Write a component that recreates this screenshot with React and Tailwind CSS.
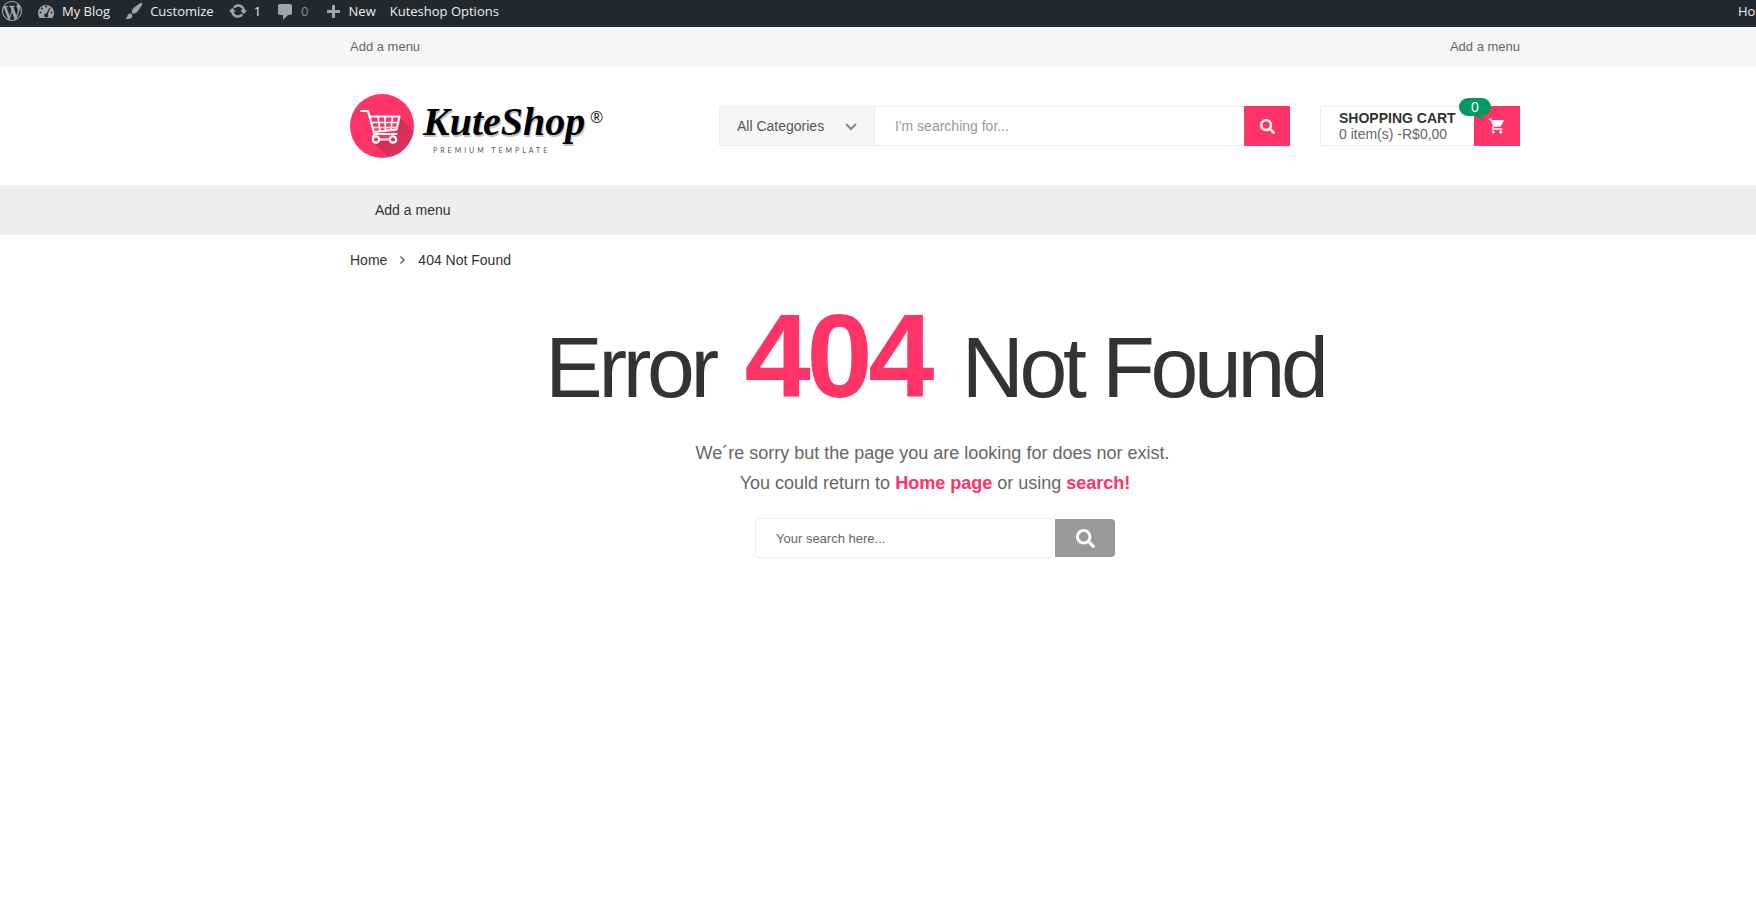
import React from "react";
import { FaSearch } from "react-icons/fa";
import { MdShoppingCart } from "react-icons/md";

const container = "pl-[350px] pr-[236px]";

const icons = {
  wordpress:
    "M20 10c0-5.51-4.49-10-10-10C4.48 0 0 4.49 0 10c0 5.52 4.48 10 10 10 5.51 0 10-4.48 10-10zM7.78 15.37L4.37 6.22c.55-.02 1.17-.08 1.17-.08.5-.06.44-1.13-.06-1.11 0 0-1.45.11-2.37.11-.18 0-.37 0-.58-.01C4.12 2.69 6.87 1.11 10 1.11c2.33 0 4.45.87 6.05 2.34-.68-.11-1.65.39-1.65 1.58 0 .74.45 1.36.9 2.1.35.61.55 1.36.55 2.46 0 1.49-1.4 5-1.4 5l-3.03-8.37c.54-.02.82-.17.82-.17.5-.05.44-1.25-.06-1.22 0 0-1.44.12-2.38.12-.87 0-2.33-.12-2.33-.12-.5-.03-.56 1.2-.06 1.22l.92.08 1.26 3.41zM17.41 10c.24-.64.74-1.87.43-4.25.7 1.29 1.05 2.71 1.05 4.25 0 3.29-1.73 6.24-4.4 7.78.97-2.59 1.94-5.2 2.92-7.78zM6.1 18.09C3.12 16.65 1.11 13.53 1.11 10c0-1.3.23-2.48.72-3.59C3.25 10.3 4.67 14.2 6.1 18.09zm4.03-6.63l2.58 6.98c-.86.29-1.76.45-2.71.45-.79 0-1.57-.11-2.29-.33.81-2.38 1.62-4.74 2.42-7.1z",
  dashboard:
    "M3.8 17h12.4c1.1-1.4 1.8-3.1 1.8-5a8 8 0 1 0-16 0c0 1.9.7 3.6 1.8 5zM9 5.500a1 1 0 1 1 2 0a1 1 0 1 1-2 0zM5 7.500a1 1 0 1 1 2 0a1 1 0 1 1-2 0zM13.700 6.200l.8.500-2.700 6.600a2 2 0 1 1-1.500-.8zM3.500 11.500a1 1 0 1 1 2 0a1 1 0 1 1-2 0zM14.500 11.500a1 1 0 1 1 2 0a1 1 0 1 1-2 0z",
  brush:
    "M18.33 3.57s.27-.8-.31-1.36c-.53-.52-1.22-.24-1.22-.24-.61.3-5.76 3.47-7.67 5.57-.86.96-2.06 3.79-1.09 4.82.92.98 3.96-.17 4.79-1 2.06-2.06 5.21-7.17 5.5-7.79zM1.4 17.65c2.37-1.56 1.46-3.41 3.23-4.64.93-.65 2.22-.62 3.08.29.63.67.8 2.57-.16 3.46-1.57 1.45-4 1.55-6.15.89z",
  update:
    "M10.2 3.28c3.53 0 6.43 2.61 6.92 6h2.08l-3.5 4-3.5-4h2.32c-.45-1.97-2.21-3.45-4.32-3.45-1.45 0-2.73.71-3.54 1.78L4.95 5.66C6.23 4.2 8.11 3.28 10.2 3.28zm-.4 13.44c-3.52 0-6.43-2.61-6.92-6H.8l3.5-4c1.17 1.33 2.33 2.67 3.5 4H5.48c.45 1.97 2.21 3.45 4.32 3.45 1.45 0 2.73-.71 3.54-1.78l1.71 1.95c-1.28 1.46-3.15 2.38-5.25 2.38z",
  comment:
    "M5 3h10c1.100 0 2 .9 2 2v7c0 1.100-.9 2-2 2h-2l-5 5v-5H5c-1.100 0-2-.9-2-2V5c0-1.100.9-2 2-2z",
  plus: "M17 9v3h-5v5H9v-5H4V9h5V4h3v5h5z",
};

function BarItem({ icon, label, dim, title }) {
  return (
    <a href="#" aria-label={title} className="flex items-center gap-1.5">
      {icon && (
        <svg viewBox="0 0 20 20" className="size-5 fill-[#a0a5aa]" fillRule="evenodd" aria-hidden="true">
          <path d={icons[icon]} />
        </svg>
      )}
      {label && <span className={dim ? "text-[#8b8f93]" : "text-[#eeeeee]"}>{label}</span>}
    </a>
  );
}

function AdminBar() {
  return (
    <nav className="flex h-[27px] items-start justify-between overflow-hidden bg-[#23282d] pt-px pl-0.5 font-['Segoe_UI','Open_Sans',sans-serif] text-[13px] leading-5 whitespace-nowrap">
      <div className="flex items-center gap-3.5">
        <BarItem icon="wordpress" title="About WordPress" />
        <BarItem icon="dashboard" label="My Blog" />
        <BarItem icon="brush" label="Customize" />
        <BarItem icon="update" label="1" />
        <BarItem icon="comment" label="0" dim />
        <BarItem icon="plus" label="New" />
        <BarItem label="Kuteshop Options" />
      </div>
      <span className="w-[18px] text-[#eeeeee]">Howdy,</span>
    </nav>
  );
}

function Logo() {
  return (
    <a href="#" aria-label="KuteShop" className="block">
      <svg viewBox="0 0 256 66" className="h-[66px] w-[256px]">
        <defs>
          <clipPath id="disc">
            <circle cx="32" cy="32" r="32" />
          </clipPath>
          <linearGradient id="shade" x1="0" y1="0" x2="1" y2="1">
            <stop offset="0" stopColor="#c22b55" />
            <stop offset="1" stopColor="#f03361" />
          </linearGradient>
        </defs>
        <circle cx="32" cy="32" r="32" fill="#ff3366" />
        <path clipPath="url(#disc)" d="M50 24L72 46L60 72H46L24 49L45 43z" fill="url(#shade)" />
        <g fill="none" stroke="#fff" strokeLinecap="round" strokeLinejoin="round">
          <path strokeWidth="2.200" d="M11 17h7l6.500 23h22M20 22.500h29.500l-3 13-23 2.500M24.500 40l-1.500 3" />
          <path strokeWidth="1.700" d="M21.500 28.500h26M28 23l2 14.500M35 23l.5 14M42.500 23l-1.500 13M23 33.500h24" />
          <circle strokeWidth="2.200" cx="26" cy="45.500" r="3.200" />
          <circle strokeWidth="2.200" cx="43" cy="45.500" r="3.200" />
          <path strokeWidth="2.200" d="M29.500 45.500h10" />
        </g>
        <text
          x="73"
          y="41"
          fill="#000"
          fontSize="40"
          className="font-['Brush_Script_MT','Liberation_Serif',serif] font-bold italic [text-shadow:1px_2px_0_#c4c4c4]"
        >
          KuteShop
        </text>
        <text x="83" y="59" fill="#555" fontFamily="Lato, sans-serif" fontSize="7" letterSpacing="3">PREMIUM TEMPLATE</text>
        <text x="240" y="29" fill="#222" fontFamily="'Open Sans', sans-serif" fontSize="16">®</text>
      </svg>
    </a>
  );
}

function Header() {
  return (
    <header className={`flex h-[118px] items-start pt-[27px] ${container}`}>
      <Logo />
      <form className="mt-3 ml-[113px] flex h-10 flex-1 border border-r-0 border-[#eeeeee]">
        <div className="relative flex w-[155px] border-r border-[#eeeeee] bg-[#f6f6f6]">
          <select aria-label="Category" className="w-full appearance-none bg-transparent pl-[17px] text-sm text-[#555]">
            <option>All Categories</option>
          </select>
          <svg viewBox="0 0 12 8" className="pointer-events-none absolute top-4 right-[17px] h-2 w-3" fill="none" stroke="#888" strokeWidth="2" aria-hidden="true">
            <path d="M1 1l5 5 5-5" />
          </svg>
        </div>
        <input aria-label="Search products" placeholder="I'm searching for..." className="min-w-0 flex-1 px-5 text-sm outline-none placeholder:text-[#999]" />
        <button aria-label="Search" className="-my-px flex w-[46px] items-center justify-center bg-[#ff3366] text-white">
          <FaSearch className="size-[15px]" />
        </button>
      </form>
      <a href="#" className="relative mt-3 ml-[30px] flex h-10 w-[200px] justify-between">
        <span className="flex-1 border border-r-0 border-[#eeeeee] pt-[3px] pl-[18px] text-sm leading-4 whitespace-nowrap text-[#666]">
          <b className="block text-[#333]">SHOPPING CART</b>
          0 item(s) -R$0,00
        </span>
        <span className="flex w-[46px] items-center justify-center bg-[#ff3366] text-white">
          <MdShoppingCart className="size-[18px]" />
        </span>
        <span className="absolute -top-2 right-[29px] h-[18px] w-8 rounded-full bg-[#009966] text-center text-sm leading-[18px] text-white">
          0
          <svg viewBox="0 0 8 5" className="absolute top-[17px] right-[9px] h-[5px] w-2" fill="#009966" aria-hidden="true">
            <path d="M0 0h8v5z" />
          </svg>
        </span>
      </a>
    </header>
  );
}

export default function App() {
  return (
    <div className="min-h-screen overflow-x-hidden bg-white font-['Liberation_Sans',Arial,sans-serif] text-sm text-[#333]">
      <AdminBar />
      <div className={`flex h-10 items-center justify-between bg-[#f6f6f6] text-[13px] text-[#666] ${container}`}>
        <a href="#">Add a menu</a>
        <a href="#">Add a menu</a>
      </div>
      <Header />
      <nav className={`flex h-[50px] items-center bg-[#eeeeee] ${container}`}>
        <a href="#" className="pl-[25px]">Add a menu</a>
      </nav>
      <main className={container}>
        <nav aria-label="Breadcrumb" className="flex h-[50px] items-center">
          <a href="#">Home</a>
          <svg viewBox="0 0 5 8" className="mx-[13px] h-2 w-[5px]" fill="none" stroke="#555" strokeWidth="1.300" aria-hidden="true">
            <path d="M.5.5L4 4 .5 7.500" />
          </svg>
          <span>404 Not Found</span>
        </nav>
        <section className="flex flex-col items-center text-center">
          <h1 className="text-[86px] leading-[141px] tracking-tighter whitespace-nowrap">
            Error <b className="mr-3 ml-2.5 text-[119px] text-[#ff3366]">404</b> Not Found
          </h1>
          <p className="text-lg leading-[30px] text-[#666]">
            We´re sorry but the page you are looking for does nor exist.&nbsp;
            <br />
            You could return to <a href="#" className="font-bold text-[#ff3366]">Home page</a> or using{" "}
            <a href="#" className="font-bold text-[#ff3366]">search!</a>
          </p>
          <form className="mt-5 flex h-10 w-[360px] items-center">
            <input aria-label="Search" placeholder="Your search here..." className="h-10 min-w-0 flex-1 rounded-l border border-r-0 border-[#eeeeee] px-5 text-[13px] outline-none placeholder:text-[#666]" />
            <button aria-label="Submit search" className="flex h-[38px] w-[60px] items-center justify-center rounded-r bg-[#999] text-white">
              <FaSearch className="size-[19px]" />
            </button>
          </form>
        </section>
      </main>
    </div>
  );
}
